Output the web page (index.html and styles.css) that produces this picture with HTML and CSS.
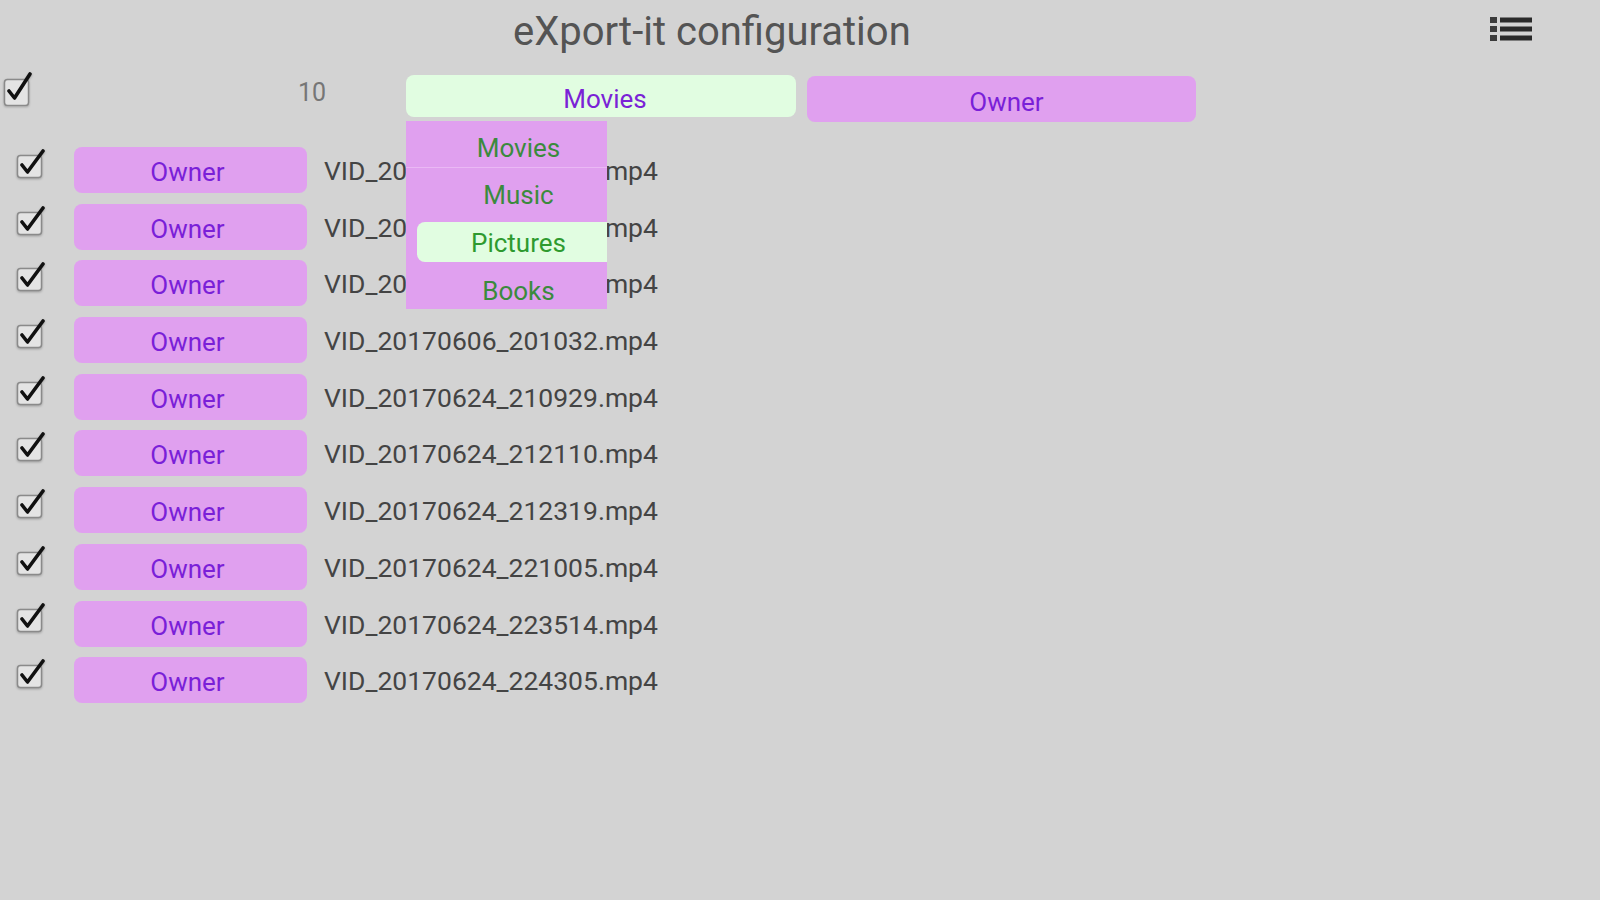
FILE: index.html
```html
<!DOCTYPE html>
<html lang="en">
<head>
<meta charset="utf-8">
<title>eXport-it configuration</title>
<link rel="stylesheet" href="styles.css">
</head>
<body>
<div class="app">
  <header class="topbar">
    <h1 class="title">eXport-it configuration</h1>
    <button class="menu" aria-label="Menu">
      <svg width="42" height="28" viewBox="0 0 42 28">
        <rect x="0" y="2" width="7" height="6" fill="#3a3a3a"/>
        <rect x="0" y="11" width="7" height="6" fill="#3a3a3a"/>
        <rect x="0" y="20" width="7" height="6" fill="#3a3a3a"/>
        <rect x="10" y="2.5" width="32" height="5" fill="#2a2a2a"/>
        <rect x="10" y="11.5" width="32" height="5" fill="#2a2a2a"/>
        <rect x="10" y="20.5" width="32" height="5" fill="#2a2a2a"/>
      </svg>
    </button>
  </header>

  <div class="master">
    <span class="cb cb-master">
      <svg width="30" height="34" viewBox="0 0 30 34">
        <rect x="1.5" y="7.5" width="24" height="26" rx="3" fill="#e4e4e4" stroke="#8a8a8a" stroke-width="1.5"/>
        <path d="M6 19 L11.5 26 L27 2" fill="none" stroke="#111" stroke-width="3.6" stroke-linecap="round" stroke-linejoin="round"/>
      </svg>
    </span>
    <span class="count">10</span>
    <div class="select">
      <div class="select-btn">Movies</div>
      <ul class="dropdown">
        <li class="opt opt-sep">Movies</li>
        <li class="opt">Music</li>
        <li class="opt opt-active"><span>Pictures</span></li>
        <li class="opt opt-last">Books</li>
      </ul>
    </div>
    <div class="owner owner-master">Owner</div>
  </div>

  <ul class="files">
    <li class="row"><span class="cb"><svg width="30" height="30" viewBox="0 0 30 30"><rect x="1.5" y="6.5" width="24" height="22" rx="3" fill="#e4e4e4" stroke="#8a8a8a" stroke-width="1.5"/><path d="M6 16 L11.5 23 L27 2" fill="none" stroke="#111" stroke-width="3.6" stroke-linecap="round" stroke-linejoin="round"/></svg></span><div class="owner">Owner</div><span class="fname">VID_20170606_200520.mp4</span></li>
    <li class="row"><span class="cb"><svg width="30" height="30" viewBox="0 0 30 30"><rect x="1.5" y="6.5" width="24" height="22" rx="3" fill="#e4e4e4" stroke="#8a8a8a" stroke-width="1.5"/><path d="M6 16 L11.5 23 L27 2" fill="none" stroke="#111" stroke-width="3.6" stroke-linecap="round" stroke-linejoin="round"/></svg></span><div class="owner">Owner</div><span class="fname">VID_20170606_200752.mp4</span></li>
    <li class="row"><span class="cb"><svg width="30" height="30" viewBox="0 0 30 30"><rect x="1.5" y="6.5" width="24" height="22" rx="3" fill="#e4e4e4" stroke="#8a8a8a" stroke-width="1.5"/><path d="M6 16 L11.5 23 L27 2" fill="none" stroke="#111" stroke-width="3.6" stroke-linecap="round" stroke-linejoin="round"/></svg></span><div class="owner">Owner</div><span class="fname">VID_20170606_200914.mp4</span></li>
    <li class="row"><span class="cb"><svg width="30" height="30" viewBox="0 0 30 30"><rect x="1.5" y="6.5" width="24" height="22" rx="3" fill="#e4e4e4" stroke="#8a8a8a" stroke-width="1.5"/><path d="M6 16 L11.5 23 L27 2" fill="none" stroke="#111" stroke-width="3.6" stroke-linecap="round" stroke-linejoin="round"/></svg></span><div class="owner">Owner</div><span class="fname">VID_20170606_201032.mp4</span></li>
    <li class="row"><span class="cb"><svg width="30" height="30" viewBox="0 0 30 30"><rect x="1.5" y="6.5" width="24" height="22" rx="3" fill="#e4e4e4" stroke="#8a8a8a" stroke-width="1.5"/><path d="M6 16 L11.5 23 L27 2" fill="none" stroke="#111" stroke-width="3.6" stroke-linecap="round" stroke-linejoin="round"/></svg></span><div class="owner">Owner</div><span class="fname">VID_20170624_210929.mp4</span></li>
    <li class="row"><span class="cb"><svg width="30" height="30" viewBox="0 0 30 30"><rect x="1.5" y="6.5" width="24" height="22" rx="3" fill="#e4e4e4" stroke="#8a8a8a" stroke-width="1.5"/><path d="M6 16 L11.5 23 L27 2" fill="none" stroke="#111" stroke-width="3.6" stroke-linecap="round" stroke-linejoin="round"/></svg></span><div class="owner">Owner</div><span class="fname">VID_20170624_212110.mp4</span></li>
    <li class="row"><span class="cb"><svg width="30" height="30" viewBox="0 0 30 30"><rect x="1.5" y="6.5" width="24" height="22" rx="3" fill="#e4e4e4" stroke="#8a8a8a" stroke-width="1.5"/><path d="M6 16 L11.5 23 L27 2" fill="none" stroke="#111" stroke-width="3.6" stroke-linecap="round" stroke-linejoin="round"/></svg></span><div class="owner">Owner</div><span class="fname">VID_20170624_212319.mp4</span></li>
    <li class="row"><span class="cb"><svg width="30" height="30" viewBox="0 0 30 30"><rect x="1.5" y="6.5" width="24" height="22" rx="3" fill="#e4e4e4" stroke="#8a8a8a" stroke-width="1.5"/><path d="M6 16 L11.5 23 L27 2" fill="none" stroke="#111" stroke-width="3.6" stroke-linecap="round" stroke-linejoin="round"/></svg></span><div class="owner">Owner</div><span class="fname">VID_20170624_221005.mp4</span></li>
    <li class="row"><span class="cb"><svg width="30" height="30" viewBox="0 0 30 30"><rect x="1.5" y="6.5" width="24" height="22" rx="3" fill="#e4e4e4" stroke="#8a8a8a" stroke-width="1.5"/><path d="M6 16 L11.5 23 L27 2" fill="none" stroke="#111" stroke-width="3.6" stroke-linecap="round" stroke-linejoin="round"/></svg></span><div class="owner">Owner</div><span class="fname">VID_20170624_223514.mp4</span></li>
    <li class="row"><span class="cb"><svg width="30" height="30" viewBox="0 0 30 30"><rect x="1.5" y="6.5" width="24" height="22" rx="3" fill="#e4e4e4" stroke="#8a8a8a" stroke-width="1.5"/><path d="M6 16 L11.5 23 L27 2" fill="none" stroke="#111" stroke-width="3.6" stroke-linecap="round" stroke-linejoin="round"/></svg></span><div class="owner">Owner</div><span class="fname">VID_20170624_224305.mp4</span></li>
  </ul>
</div>
</body>
</html>
```

FILE: styles.css
```css
* { box-sizing: border-box; }

html, body {
  margin: 0;
  padding: 0;
  height: 100%;
}

body {
  background: #d3d3d3;
  font-family: Roboto, "Liberation Sans", sans-serif;
}

.app {
  width: 1600px;
  height: 900px;
  overflow: hidden;
}

.topbar {
  display: flex;
  align-items: flex-start;
  height: 62px;
}

.title {
  margin: 0;
  padding-top: 2px;
  padding-left: 513px;
  font-size: 40px;
  font-weight: 400;
  line-height: 60px;
  color: #545454;
}

.menu {
  margin-left: auto;
  margin-right: 68px;
  margin-top: 15px;
  padding: 0;
  border: 0;
  background: none;
  display: block;
  line-height: 0;
  filter: blur(0.6px);
}

.cb { display: block; line-height: 0; }
.cb svg { display: block; filter: drop-shadow(0 1px 1px rgba(0,0,0,0.25)); }

.master {
  display: flex;
  align-items: flex-start;
  height: 80px;
}

.cb-master {
  margin-left: 3px;
  margin-top: 10px;
}

.count {
  width: 28px;
  margin-left: 265px;
  margin-top: 16px;
  font-size: 25px;
  line-height: 30px;
  color: #767676;
}

.select {
  position: relative;
  margin-left: 80px;
  margin-top: 13px;
  width: 390px;
}

.select-btn {
  height: 42px;
  padding-top: 8px;
  padding-left: 8px;
  line-height: 33px;
  border-radius: 8px;
  background: #e1fde1;
  color: #7a22d6;
  font-size: 26px;
  text-align: center;
}

.dropdown {
  position: absolute;
  left: 0;
  top: 46px;
  width: 201px;
  margin: 0;
  padding: 0;
  list-style: none;
  background: #e0a0ef;
  z-index: 5;
}

.opt {
  height: 47px;
  padding-left: 24px;
  padding-top: 3px;
  font-size: 26px;
  line-height: 49px;
  text-align: center;
  color: #3b8a3d;
}

.opt-sep { border-bottom: 1px solid #eab8f4; }

.opt-last { padding-top: 6px; line-height: 46px; }

.opt-active {
  padding: 7px 0 0 11px;
}

.opt-active span {
  display: block;
  height: 40px;
  padding-left: 13px;
  line-height: 42px;
  background: #e1fde1;
  border-radius: 8px 0 0 8px;
  color: #2e9a2f;
}

.owner {
  width: 233px;
  height: 46px;
  margin-left: 28px;
  margin-top: 5px;
  padding-top: 5px;
  padding-right: 6px;
  border-radius: 8px;
  background: #e0a0ef;
  color: #7a1fd8;
  font-size: 26px;
  line-height: 41px;
  text-align: center;
}

.owner-master {
  width: 389px;
  margin-left: 11px;
  margin-top: 14px;
  padding-top: 6px;
  padding-right: 0;
  padding-left: 10px;
  line-height: 40px;
}

.files {
  margin: 0;
  padding: 0;
  list-style: none;
}

.row {
  display: flex;
  align-items: flex-start;
  height: 56.7px;
}

.row .cb {
  margin-left: 16px;
  margin-top: 7px;
}

.fname {
  margin-left: 17px;
  margin-top: 6px;
  font-size: 26.5px;
  line-height: 46px;
  color: #444;
  white-space: nowrap;
}
```
